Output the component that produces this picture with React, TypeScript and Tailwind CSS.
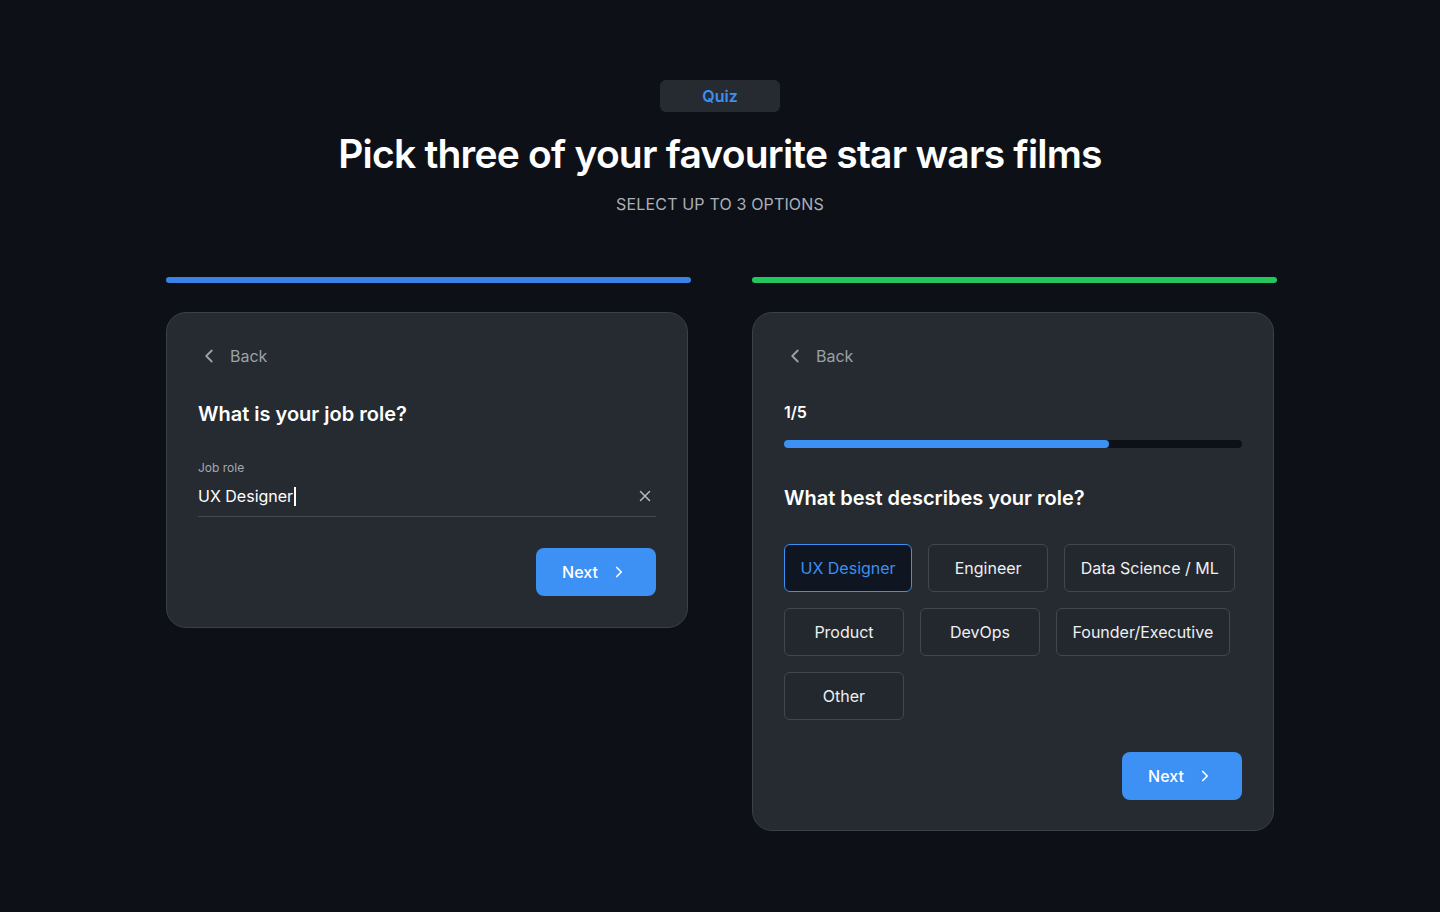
import { ChevronLeft, ChevronRight, X } from "lucide-react";

const roles = ["UX Designer", "Engineer", "Data Science / ML", "Product", "DevOps", "Founder/Executive", "Other"];

const BackLink = () => (
  <button className="flex items-center gap-[10px] text-[16px] leading-6 text-[#9ba1a8]">
    <ChevronLeft size={22} strokeWidth={2} />
    <span>Back</span>
  </button>
);

const NextButton = () => (
  <button className="flex h-12 w-[120px] items-center justify-center gap-3 rounded-lg bg-[#3d91f4] pr-[2px] text-[16px] font-medium text-white">
    Next
    <ChevronRight size={18} strokeWidth={2.25} />
  </button>
);

const App = () => {
  const selected = "UX Designer";
  return (
    <div className="min-h-[912px] w-full bg-[#0d1117] font-['Inter',sans-serif] text-white">
      <div className="flex flex-col items-center pt-20">
        <span className="flex h-8 w-[120px] items-center justify-center rounded-md bg-[#262b32] text-[16px] font-semibold text-[#3d8ff0]">
          Quiz
        </span>
        <h1 className="mt-[18px] text-[39px] font-semibold leading-[48px] tracking-[-0.02em] text-white">
          Pick three of your favourite star wars films
        </h1>
        <p className="mt-[14px] text-[16px] leading-6 tracking-[0.01em] text-[#aab0b7]">SELECT UP TO 3 OPTIONS</p>
      </div>

      <div className="mx-auto mt-[61px] flex w-[1112px] items-start gap-[61px] pl-[2px]">
        {/* text input variant */}
        <div className="flex w-[525px] flex-col">
          <div className="h-[6px] w-[525px] rounded-full bg-[#3b82e6]" />
          <div className="mt-[29px] w-[522px] rounded-[20px] border border-[#3a4047] bg-[#262b32] px-[31px] pb-[31px] pt-[31px]">
            <BackLink />
            <h2 className="mt-8 text-[20px] font-semibold leading-7 text-white">What is your job role?</h2>
            <label className="mt-8 block text-[12px] leading-4 text-[#a3a9b0]">Job role</label>
            <div className="mt-2 flex items-center justify-between border-b border-[#454b53] pb-2">
              <span className="flex items-center text-[16px] leading-6 text-white">
                UX Designer
                <span className="ml-[1px] inline-block h-[19px] w-[1.5px] bg-white" />
              </span>
              <X size={18} strokeWidth={2} className="mr-[2px] text-[#b7bcc2]" />
            </div>
            <div className="mt-[31px] flex justify-end">
              <NextButton />
            </div>
          </div>
        </div>

        {/* multiple choice variant */}
        <div className="flex w-[525px] flex-col">
          <div className="h-[6px] w-[525px] rounded-full bg-[#22c55e]" />
          <div className="mt-[29px] w-[522px] rounded-[20px] border border-[#3a4047] bg-[#262b32] px-[31px] pb-[30px] pt-[31px]">
            <BackLink />
            <p className="mt-8 text-[16px] font-semibold leading-6 text-white">1/5</p>
            <div className="mt-4 h-2 w-full rounded-full bg-[#0d1117]">
              <div className="h-2 w-[71%] rounded-full bg-[#3d91f4]" />
            </div>
            <h2 className="mt-9 text-[20px] font-semibold leading-7 text-white">What best describes your role?</h2>
            <div className="mt-8 flex w-[458px] flex-wrap gap-4">
              {roles.map((role) =>
                role === selected ? (
                  <button
                    key={role}
                    className="h-12 min-w-[120px] rounded-md border border-[#3d8ff0] bg-[#0f1621] px-[15.5px] text-[16px] text-[#3d8ff0]"
                  >
                    {role}
                  </button>
                ) : (
                  <button
                    key={role}
                    className="h-12 min-w-[120px] rounded-md border border-[#42484f] bg-[#23282e] px-[15.5px] text-[16px] text-[#eef0f2]"
                  >
                    {role}
                  </button>
                )
              )}
            </div>
            <div className="mt-8 flex justify-end">
              <NextButton />
            </div>
          </div>
        </div>
      </div>
    </div>
  );
};

export default App;
